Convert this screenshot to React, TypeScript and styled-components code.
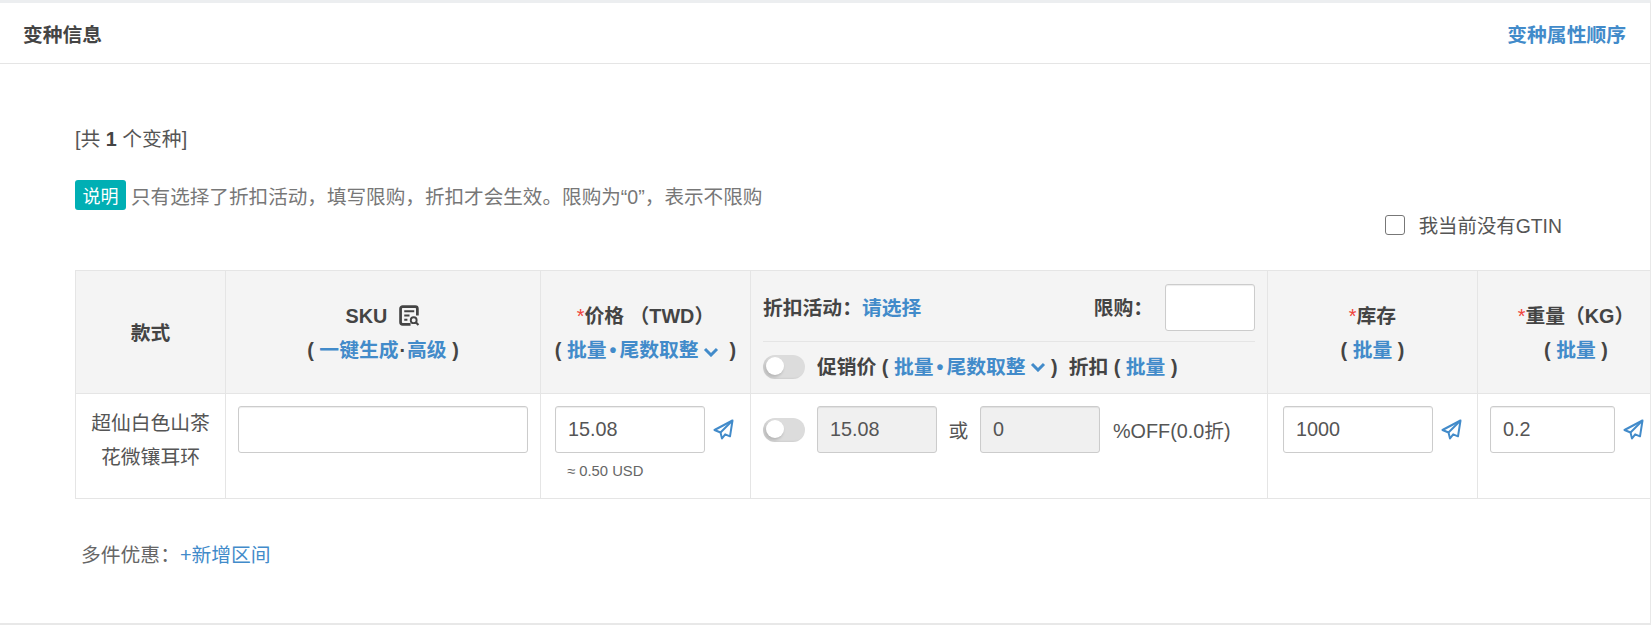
import React from 'react'
import styled, { createGlobalStyle } from 'styled-components'

const BLUE = '#428bca'

// full-width punctuation, as on the real page
const COMMA = '\uFF0C'
const COLON = '\uFF1A'
const LP = '\uFF08'
const RP = '\uFF09'

const GlobalStyle = createGlobalStyle`
  html, body {
    margin: 0;
    padding: 0;
    background: #fff;
  }
  body {
    font-family: "Liberation Sans", "Noto Sans CJK SC", sans-serif;
    font-size: 19.8px;
    color: #555;
  }
  * {
    box-sizing: border-box;
  }
`

const Card = styled.section`
  height: 625px;
  border-top: 3px solid #eceef0;
  border-right: 1px solid #e8e8e8;
  border-bottom: 2px solid #e8e8e8;
  overflow: hidden;
`
const CardHeader = styled.header`
  height: 61px;
  padding: 0 24px 0 23px;
  border-bottom: 1px solid #e5e5e5;
  display: flex;
  align-items: center;
  justify-content: space-between;
`
const Title = styled.h2`
  margin: 0;
  font-size: 19.8px;
  font-weight: 700;
  color: #444;
`
const HeaderLink = styled.a`
  font-weight: 700;
  color: ${BLUE};
`
const CardBody = styled.div`
  padding: 62px 0 0 75px;
`
const Count = styled.div`
  height: 27px;
  line-height: 27px;
  color: #555;
  b {
    color: #444;
  }
`
const Notice = styled.div`
  margin-top: 27px;
  display: flex;
  align-items: center;
  font-size: 19.6px;
  color: #777;
`
const Badge = styled.span`
  width: 51px;
  height: 30px;
  margin-right: 5px;
  border-radius: 3px;
  background: #00afb4;
  color: #fff;
  font-size: 18px;
  display: flex;
  align-items: center;
  justify-content: center;
`
const GtinRow = styled.div`
  margin-top: 1px;
  padding-right: 88px;
  height: 27px;
  display: flex;
  align-items: center;
  justify-content: flex-end;
  font-size: 19.4px;
  color: #555;
`
const Checkbox = styled.span`
  width: 20px;
  height: 20px;
  margin-right: 14px;
  border: 1px solid #777;
  border-radius: 3px;
  background: #fff;
`
const Table = styled.table`
  margin-top: 32px;
  width: 1600px;
  table-layout: fixed;
  border-collapse: collapse;
  th, td {
    border: 1px solid #e5e5e5;
    padding: 0;
    text-align: center;
    vertical-align: top;
  }
  th {
    background: #f4f4f4;
    height: 123px;
    padding-top: 2px;
    font-weight: 700;
    color: #444;
    line-height: 34px;
    vertical-align: middle;
  }
  td {
    height: 105px;
  }
`
const Req = styled.span`
  color: #f0433a;
  font-weight: 400;
`
const Link = styled.a`
  color: ${BLUE};
  font-weight: ${p => (p.$thin ? 400 : 700)};
`
const Dot = styled.span`
  margin: 0 3px;
  color: ${BLUE};
`
const Sep = styled.span`
  margin: 0 1px;
`
const NameCell = styled.div`
  padding: 12px 10px 0;
  line-height: 34px;
  color: #555;
`
const InputRow = styled.div`
  display: flex;
  align-items: center;
  padding-top: 12px;
  padding-left: ${p => p.$left}px;
`
const Field = styled.div`
  width: ${p => p.$width}px;
  height: 47px;
  padding: 0 12px;
  flex: none;
  border: 1px solid #ccc;
  border-radius: 3px;
  background: ${p => (p.$disabled ? '#f0f0f0' : '#fff')};
  box-shadow: inset 0 1px 1px rgba(0, 0, 0, 0.075);
  line-height: 45px;
  text-align: left;
  color: #555;
  font-weight: 400;
`
const SendBtn = styled.svg`
  width: 21px;
  height: 21px;
  margin-left: 8px;
  flex: none;
  fill: none;
  stroke: ${BLUE};
  stroke-width: 2;
  stroke-linejoin: round;
`
const Approx = styled.div`
  margin-top: 8px;
  padding-left: 26px;
  text-align: left;
  font-size: 14.8px;
  line-height: 20px;
  color: #666;
`
const PromoHead = styled.div`
  padding: 0 12px;
`
const PromoTop = styled.div`
  height: 67px;
  border-bottom: 1px solid #e5e5e5;
  display: flex;
  align-items: center;
  justify-content: space-between;
`
const Limit = styled.div`
  display: flex;
  align-items: center;
  gap: 12px;
`
const PromoBottom = styled.div`
  height: 50px;
  display: flex;
  align-items: center;
  white-space: pre;
`
const Toggle = styled.span`
  position: relative;
  width: 42px;
  height: 24px;
  margin-right: 12px;
  flex: none;
  border-radius: 12px;
  background: #dcdcdc;
  box-shadow: inset 2px -1px 2px rgba(0, 0, 0, 0.06);
  &::after {
    content: '';
    position: absolute;
    left: 3px;
    top: 2px;
    width: 18px;
    height: 18px;
    border-radius: 50%;
    background: #fff;
    box-shadow: -1px 2px 3px rgba(0, 0, 0, 0.18);
  }
`
const Or = styled.span`
  width: 43px;
  text-align: center;
  flex: none;
`
const OffText = styled.span`
  margin-left: 13px;
  white-space: nowrap;
`
const Chevron = styled.svg`
  width: 16px;
  height: 10px;
  margin-left: 4px;
  flex: none;
  fill: none;
  stroke: ${BLUE};
  stroke-width: 3;
`
const DocIcon = styled.svg`
  width: 21px;
  height: 21px;
  margin-left: 12px;
  vertical-align: -3px;
  fill: none;
  stroke: #444;
`
const Extra = styled.div`
  margin-top: 40px;
  padding-left: 6px;
  color: #666;
`

const Send = () => (
  <SendBtn viewBox="0 0 21 21">
    <path d="M19.5 1.5 1.5 11l6 2.5 1.5 6 3.2-4.2 4.8 2z" />
    <path d="M19.5 1.5 7.5 13.5" />
  </SendBtn>
)

const Down = () => (
  <Chevron viewBox="0 0 16 10">
    <path d="M2 2l6 6 6-6" />
  </Chevron>
)

const Doc = () => (
  <DocIcon viewBox="0 0 20 20">
    <path strokeWidth="2.6" d="M11 18.5H3.5a2 2 0 0 1-2-2v-13a2 2 0 0 1 2-2h12a2 2 0 0 1 2 2V10" />
    <path strokeWidth="2" d="M5 6h9.5M5 10h5M5 14h3" />
    <circle cx="14" cy="14.5" r="2.8" strokeWidth="1.8" />
    <path strokeWidth="2" d="m16 16.5 2.5 2.5" />
  </DocIcon>
)

const Rounding = () => (
  <>
    <Link>批量</Link><Dot>•</Dot><Link>尾数取整</Link><Down />
  </>
)

export default function App() {
  return (
    <>
      <GlobalStyle />
      <Card>
        <CardHeader>
          <Title>变种信息</Title>
          <HeaderLink>变种属性顺序</HeaderLink>
        </CardHeader>
        <CardBody>
          <Count>[共 <b>1</b> 个变种]</Count>
          <Notice>
            <Badge>说明</Badge>
            {`只有选择了折扣活动${COMMA}填写限购${COMMA}折扣才会生效。限购为“0”${COMMA}表示不限购`}
          </Notice>
          <GtinRow>
            <Checkbox />
            我当前没有GTIN
          </GtinRow>
          <Table>
            <colgroup>
              <col style={{ width: 150 }} />
              <col style={{ width: 315 }} />
              <col style={{ width: 210 }} />
              <col style={{ width: 517 }} />
              <col style={{ width: 210 }} />
              <col />
            </colgroup>
            <thead>
              <tr>
                <th>款式</th>
                <th>
                  <div>SKU<Doc /></div>
                  <div>( <Link>一键生成</Link><Sep>·</Sep><Link>高级</Link> )</div>
                </th>
                <th>
                  <div><Req>*</Req>{`价格 ${LP}TWD${RP}`}</div>
                  <div>( <Rounding />&nbsp; )</div>
                </th>
                <th>
                  <PromoHead>
                    <PromoTop>
                      <span>{`折扣活动${COLON}`}<Link>请选择</Link></span>
                      <Limit>
                        {`限购${COLON}`}
                        <Field $width={90} />
                      </Limit>
                    </PromoTop>
                    <PromoBottom>
                      <Toggle />
                      促销价 ( <Rounding />{' )  '}折扣 ( <Link>批量</Link> )
                    </PromoBottom>
                  </PromoHead>
                </th>
                <th>
                  <div><Req>*</Req>库存</div>
                  <div>( <Link>批量</Link> )</div>
                </th>
                <th>
                  <div><Req>*</Req>{`重量${LP}KG${RP}`}</div>
                  <div>( <Link>批量</Link> )</div>
                </th>
              </tr>
            </thead>
            <tbody>
              <tr>
                <td>
                  <NameCell>超仙白色山茶花微镶耳环</NameCell>
                </td>
                <td>
                  <InputRow $left={12}>
                    <Field $width={290} />
                  </InputRow>
                </td>
                <td>
                  <InputRow $left={14}>
                    <Field $width={150}>15.08</Field>
                    <Send />
                  </InputRow>
                  <Approx>≈ 0.50 USD</Approx>
                </td>
                <td>
                  <InputRow $left={12}>
                    <Toggle />
                    <Field $width={120} $disabled>15.08</Field>
                    <Or>或</Or>
                    <Field $width={120} $disabled>0</Field>
                    <OffText>%OFF(0.0折)</OffText>
                  </InputRow>
                </td>
                <td>
                  <InputRow $left={15}>
                    <Field $width={150}>1000</Field>
                    <Send />
                  </InputRow>
                </td>
                <td>
                  <InputRow $left={12}>
                    <Field $width={125}>0.2</Field>
                    <Send />
                  </InputRow>
                </td>
              </tr>
            </tbody>
          </Table>
          <Extra>{`多件优惠${COLON}`}<Link $thin>+新增区间</Link></Extra>
        </CardBody>
      </Card>
    </>
  )
}
